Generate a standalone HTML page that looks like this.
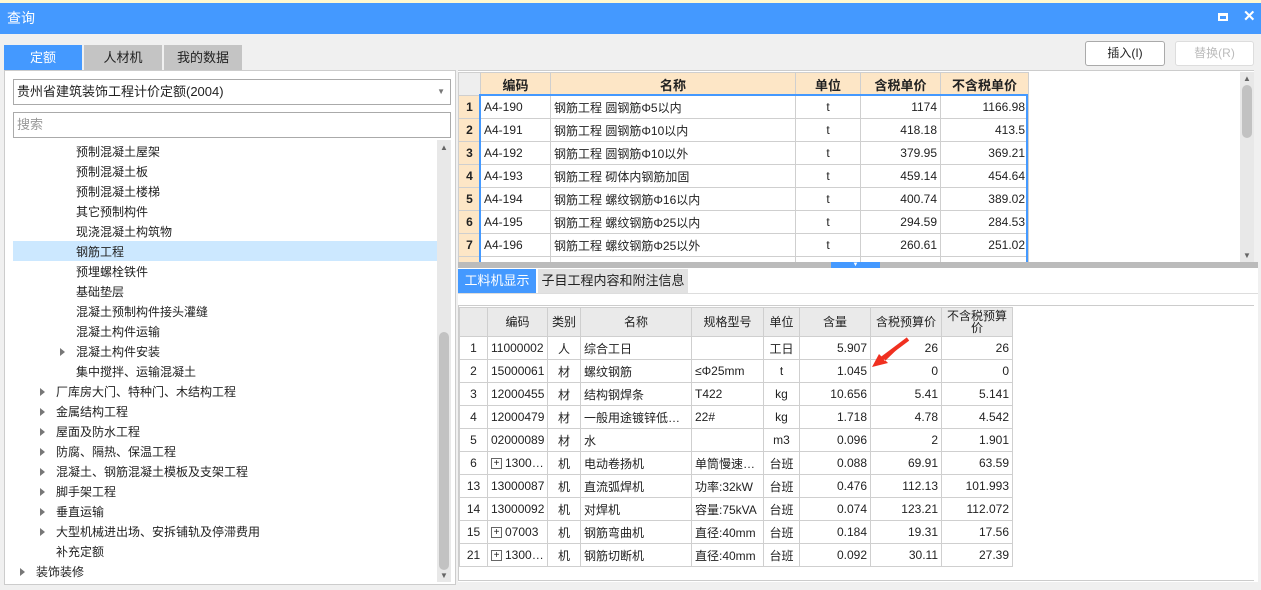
<!DOCTYPE html>
<html><head><meta charset="utf-8"><style>
*{margin:0;padding:0;box-sizing:border-box}
body{width:1261px;height:590px;overflow:hidden;background:#f0f0f0;font-family:"Liberation Sans","Noto Sans CJK SC",sans-serif;font-size:12px;color:#222;position:relative}
.a{position:absolute}
.title{left:0;top:3px;width:1261px;height:31px;background:#4499ff;color:#fff;font-size:14px;line-height:31px;padding-left:7px}
.tab{top:45px;height:25px;width:78px;text-align:center;line-height:25px;font-size:13px;background:#c4c4c4}
.btn{top:41px;height:25px;border:1px solid #aaa;border-radius:3px;background:#fff;text-align:center;line-height:23px}
table{border-collapse:collapse;table-layout:fixed;position:absolute}
td{border:1px solid #cfcfcf;height:23px;padding:0 3px;white-space:nowrap;overflow:hidden}
.r{text-align:right}.c{text-align:center}
.th td{background:#fde6c6;font-weight:bold;text-align:center;font-size:13px}
.rn{background:#fde6c6;font-weight:bold;text-align:center;padding:0}
.tr{left:0;height:20px;line-height:20px;width:424px;font-size:12px}
.tri{position:absolute;width:0;height:0;border-top:4px solid transparent;border-bottom:4px solid transparent;border-left:5px solid #777;top:6px}
.bt td{background:#fff}
.bh td{background:#eaeaea;text-align:center;height:29px;line-height:12px}
.pl{display:inline-block;width:11px;height:11px;border:1px solid #666;font-size:10px;line-height:9px;text-align:center;margin-right:3px;vertical-align:middle}
</style></head><body>
<div class="a" style="left:0;top:0;width:1261px;height:3px;background:#fff8d0"></div>
<div class="a title">查询</div>
<div class="a" style="left:1218px;top:13px;width:10px;height:8px;border:2px solid #fff;border-top-width:3px"></div>
<div class="a" style="left:1243px;top:7px;color:#fff;font-size:15px;font-weight:bold">✕</div>

<div class="a tab" style="left:4px;background:#4499ff;color:#fff">定额</div>
<div class="a tab" style="left:84px">人材机</div>
<div class="a tab" style="left:164px">我的数据</div>
<div class="a btn" style="left:1085px;width:80px">插入(I)</div>
<div class="a btn" style="left:1175px;width:79px;border-color:#ddd;color:#bbb">替换(R)</div>

<div class="a" style="left:4px;top:70px;width:452px;height:515px;background:#fff;border:1px solid #ccc"></div>
<div class="a" style="left:13px;top:79px;width:438px;height:26px;border:1px solid #aaa;background:#fff;line-height:24px;padding-left:3px;font-size:13px">贵州省建筑装饰工程计价定额(2004)<span style="position:absolute;right:5px;top:0;color:#777;font-size:8px">▼</span></div>
<div class="a" style="left:13px;top:112px;width:438px;height:26px;border:1px solid #aaa;background:#fff;line-height:24px;padding-left:3px;color:#999;font-size:13px">搜索</div>
<div class="a" style="left:437px;top:140px;width:14px;height:442px;background:#e8e8e8"></div>
<div class="a" style="left:439px;top:332px;width:10px;height:238px;background:#c2c2c2;border-radius:5px"></div>
<div class="a" style="left:440px;top:143px;color:#666;font-size:8px">▲</div>
<div class="a" style="left:440px;top:571px;color:#666;font-size:8px">▼</div>
<div class="a" style="left:13px;top:241px;width:424px;height:20px;background:#cce8ff"></div>
<div class="a" style="left:13px;top:142px;width:424px">
<div style="position:relative;height:440px">
<div class="a tr" style="top:0"><span class="a" style="left:63px">预制混凝土屋架</span></div>
<div class="a tr" style="top:20px"><span class="a" style="left:63px">预制混凝土板</span></div>
<div class="a tr" style="top:40px"><span class="a" style="left:63px">预制混凝土楼梯</span></div>
<div class="a tr" style="top:60px"><span class="a" style="left:63px">其它预制构件</span></div>
<div class="a tr" style="top:80px"><span class="a" style="left:63px">现浇混凝土构筑物</span></div>
<div class="a tr" style="top:100px"><span class="a" style="left:63px">钢筋工程</span></div>
<div class="a tr" style="top:120px"><span class="a" style="left:63px">预埋螺栓铁件</span></div>
<div class="a tr" style="top:140px"><span class="a" style="left:63px">基础垫层</span></div>
<div class="a tr" style="top:160px"><span class="a" style="left:63px">混凝土预制构件接头灌缝</span></div>
<div class="a tr" style="top:180px"><span class="a" style="left:63px">混凝土构件运输</span></div>
<div class="a tr" style="top:200px"><i class="tri" style="left:47px"></i><span class="a" style="left:63px">混凝土构件安装</span></div>
<div class="a tr" style="top:220px"><span class="a" style="left:63px">集中搅拌、运输混凝土</span></div>
<div class="a tr" style="top:240px"><i class="tri" style="left:27px"></i><span class="a" style="left:43px">厂库房大门、特种门、木结构工程</span></div>
<div class="a tr" style="top:260px"><i class="tri" style="left:27px"></i><span class="a" style="left:43px">金属结构工程</span></div>
<div class="a tr" style="top:280px"><i class="tri" style="left:27px"></i><span class="a" style="left:43px">屋面及防水工程</span></div>
<div class="a tr" style="top:300px"><i class="tri" style="left:27px"></i><span class="a" style="left:43px">防腐、隔热、保温工程</span></div>
<div class="a tr" style="top:320px"><i class="tri" style="left:27px"></i><span class="a" style="left:43px">混凝土、钢筋混凝土模板及支架工程</span></div>
<div class="a tr" style="top:340px"><i class="tri" style="left:27px"></i><span class="a" style="left:43px">脚手架工程</span></div>
<div class="a tr" style="top:360px"><i class="tri" style="left:27px"></i><span class="a" style="left:43px">垂直运输</span></div>
<div class="a tr" style="top:380px"><i class="tri" style="left:27px"></i><span class="a" style="left:43px">大型机械进出场、安拆铺轨及停滞费用</span></div>
<div class="a tr" style="top:400px"><span class="a" style="left:43px">补充定额</span></div>
<div class="a tr" style="top:420px"><i class="tri" style="left:7px"></i><span class="a" style="left:23px">装饰装修</span></div>
</div></div>

<div class="a" style="left:458px;top:70px;width:796px;height:192px;background:#fff;border-top:1px solid #ccc"></div>
<div class="a" style="left:1240px;top:72px;width:14px;height:190px;background:#e8e8e8"></div>
<div class="a" style="left:1242px;top:85px;width:10px;height:53px;background:#c2c2c2;border-radius:5px"></div>
<div class="a" style="left:1243px;top:74px;color:#666;font-size:8px">▲</div>
<div class="a" style="left:1243px;top:251px;color:#666;font-size:8px">▼</div>
<table style="left:458px;top:72px;width:570px">
<colgroup><col style="width:22px"><col style="width:70px"><col style="width:245px"><col style="width:65px"><col style="width:80px"><col style="width:88px"></colgroup>
<tr class="th"><td style="background:#eee"></td><td>编码</td><td>名称</td><td>单位</td><td>含税单价</td><td>不含税单价</td></tr>
<tr><td class="rn">1</td><td>A4-190</td><td>钢筋工程 圆钢筋Φ5以内</td><td class="c">t</td><td class="r">1174</td><td class="r">1166.98</td></tr>
<tr><td class="rn">2</td><td>A4-191</td><td>钢筋工程 圆钢筋Φ10以内</td><td class="c">t</td><td class="r">418.18</td><td class="r">413.5</td></tr>
<tr><td class="rn">3</td><td>A4-192</td><td>钢筋工程 圆钢筋Φ10以外</td><td class="c">t</td><td class="r">379.95</td><td class="r">369.21</td></tr>
<tr><td class="rn">4</td><td>A4-193</td><td>钢筋工程 砌体内钢筋加固</td><td class="c">t</td><td class="r">459.14</td><td class="r">454.64</td></tr>
<tr><td class="rn">5</td><td>A4-194</td><td>钢筋工程 螺纹钢筋Φ16以内</td><td class="c">t</td><td class="r">400.74</td><td class="r">389.02</td></tr>
<tr><td class="rn">6</td><td>A4-195</td><td>钢筋工程 螺纹钢筋Φ25以内</td><td class="c">t</td><td class="r">294.59</td><td class="r">284.53</td></tr>
<tr><td class="rn">7</td><td>A4-196</td><td>钢筋工程 螺纹钢筋Φ25以外</td><td class="c">t</td><td class="r">260.61</td><td class="r">251.02</td></tr>
<tr><td class="rn"></td><td></td><td></td><td></td><td></td><td></td></tr>
</table>
<div class="a" style="left:479px;top:94px;width:549px;height:168px;border:2px solid #4499ff;border-bottom:none"></div>
<div class="a" style="left:458px;top:262px;width:800px;height:6px;background:#bbb"></div>
<div class="a" style="left:831px;top:262px;width:49px;height:6px;background:#4499ff;color:#fff;font-size:6px;text-align:center;line-height:6px">▼</div>
<div class="a" style="left:458px;top:268px;width:800px;height:314px;background:#fff"></div>
<div class="a" style="left:458px;top:269px;width:78px;height:24px;background:#4499ff;color:#fff;text-align:center;line-height:24px;font-size:13px">工料机显示</div>
<div class="a" style="left:538px;top:269px;width:150px;height:24px;background:#e2e2e2;text-align:center;line-height:24px;font-size:13px">子目工程内容和附注信息</div>
<div class="a" style="left:458px;top:293px;width:800px;height:1px;background:#ddd"></div>
<div class="a" style="left:458px;top:305px;width:796px;height:276px;border:1px solid #ccc;border-right:none"></div>
<table class="bt" style="left:459px;top:307px;width:553px">
<colgroup><col style="width:28px"><col style="width:60px"><col style="width:33px"><col style="width:111px"><col style="width:72px"><col style="width:36px"><col style="width:71px"><col style="width:71px"><col style="width:71px"></colgroup>
<tr class="bh"><td></td><td>编码</td><td>类别</td><td>名称</td><td>规格型号</td><td>单位</td><td>含量</td><td style="padding:0">含税预算价</td><td style="padding:0">不含税预算<br>价</td></tr>
<tr><td class="c">1</td><td>11000002</td><td class="c">人</td><td>综合工日</td><td></td><td class="c">工日</td><td class="r">5.907</td><td class="r">26</td><td class="r">26</td></tr>
<tr><td class="c">2</td><td>15000061</td><td class="c">材</td><td>螺纹钢筋</td><td>≤Φ25mm</td><td class="c">t</td><td class="r">1.045</td><td class="r">0</td><td class="r">0</td></tr>
<tr><td class="c">3</td><td>12000455</td><td class="c">材</td><td>结构钢焊条</td><td>T422</td><td class="c">kg</td><td class="r">10.656</td><td class="r">5.41</td><td class="r">5.141</td></tr>
<tr><td class="c">4</td><td>12000479</td><td class="c">材</td><td>一般用途镀锌低…</td><td>22#</td><td class="c">kg</td><td class="r">1.718</td><td class="r">4.78</td><td class="r">4.542</td></tr>
<tr><td class="c">5</td><td>02000089</td><td class="c">材</td><td>水</td><td></td><td class="c">m3</td><td class="r">0.096</td><td class="r">2</td><td class="r">1.901</td></tr>
<tr><td class="c">6</td><td><span class="pl">+</span>1300…</td><td class="c">机</td><td>电动卷扬机</td><td>单筒慢速…</td><td class="c">台班</td><td class="r">0.088</td><td class="r">69.91</td><td class="r">63.59</td></tr>
<tr><td class="c">13</td><td>13000087</td><td class="c">机</td><td>直流弧焊机</td><td>功率:32kW</td><td class="c">台班</td><td class="r">0.476</td><td class="r">112.13</td><td class="r">101.993</td></tr>
<tr><td class="c">14</td><td>13000092</td><td class="c">机</td><td>对焊机</td><td>容量:75kVA</td><td class="c">台班</td><td class="r">0.074</td><td class="r">123.21</td><td class="r">112.072</td></tr>
<tr><td class="c">15</td><td><span class="pl">+</span>07003</td><td class="c">机</td><td>钢筋弯曲机</td><td>直径:40mm</td><td class="c">台班</td><td class="r">0.184</td><td class="r">19.31</td><td class="r">17.56</td></tr>
<tr><td class="c">21</td><td><span class="pl">+</span>1300…</td><td class="c">机</td><td>钢筋切断机</td><td>直径:40mm</td><td class="c">台班</td><td class="r">0.092</td><td class="r">30.11</td><td class="r">27.39</td></tr>
</table>
<svg class="a" style="left:868px;top:336px" width="44" height="34"><path d="M40 3 L14 22 L17 25 Z M4 31 L11 18 L20 27 Z" fill="#f03020"/><path d="M40 3 L12 24" stroke="#f03020" stroke-width="4"/></svg>
</body></html>
